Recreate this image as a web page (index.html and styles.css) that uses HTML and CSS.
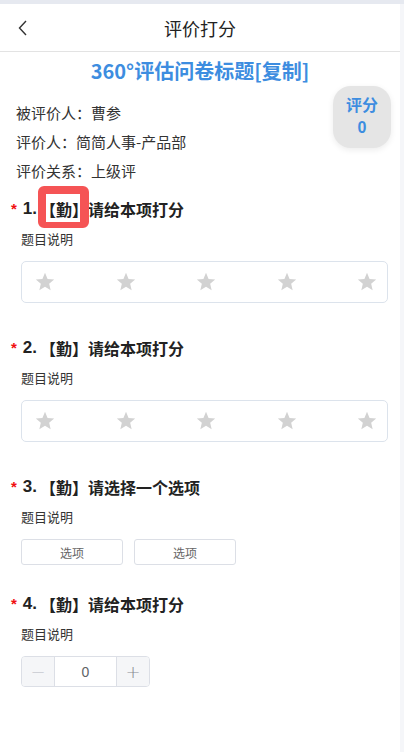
FILE: index.html
```html
<!DOCTYPE html>
<html lang="zh-CN">
<head>
<meta charset="utf-8">
<link rel="stylesheet" href="styles.css">
</head>
<body>
<div class="page">
  <header class="nav">
    <svg class="back" width="10" height="16" viewBox="0 0 10 16"><polyline points="8,1 1.5,8 8,15" fill="none" stroke="#333" stroke-width="1.4"/></svg>
    <div class="nav-title">评价打分</div>
  </header>
  <main class="content">
    <h1 class="survey-title">360°评估问卷标题[复制]</h1>
    <div class="info">
      <div class="info-line">被评价人：曹参</div>
      <div class="info-line">评价人：简简人事-产品部</div>
      <div class="info-line">评价关系：上级评</div>
      <div class="score-badge"><div>评分</div><div>0</div></div>
    </div>

    <section class="question">
      <div class="q-title"><span class="req">*</span><span class="q-num">1.</span><span class="tag mark">【勤】</span>请给本项打分</div>
      <div class="q-desc">题目说明</div>
      <div class="rate">
        <svg class="star" viewBox="0 0 24 24"><path d="M12 17.27L18.18 21l-1.64-7.03L22 9.24l-7.19-.61L12 2 9.19 8.63 2 9.24l5.46 4.73L5.82 21z"/></svg>
        <svg class="star" viewBox="0 0 24 24"><path d="M12 17.27L18.18 21l-1.64-7.03L22 9.24l-7.19-.61L12 2 9.19 8.63 2 9.24l5.46 4.73L5.82 21z"/></svg>
        <svg class="star" viewBox="0 0 24 24"><path d="M12 17.27L18.18 21l-1.64-7.03L22 9.24l-7.19-.61L12 2 9.19 8.63 2 9.24l5.46 4.73L5.82 21z"/></svg>
        <svg class="star" viewBox="0 0 24 24"><path d="M12 17.27L18.18 21l-1.64-7.03L22 9.24l-7.19-.61L12 2 9.19 8.63 2 9.24l5.46 4.73L5.82 21z"/></svg>
        <svg class="star" viewBox="0 0 24 24"><path d="M12 17.27L18.18 21l-1.64-7.03L22 9.24l-7.19-.61L12 2 9.19 8.63 2 9.24l5.46 4.73L5.82 21z"/></svg>
      </div>
    </section>

    <section class="question">
      <div class="q-title"><span class="req">*</span><span class="q-num">2.</span><span class="tag">【勤】</span>请给本项打分</div>
      <div class="q-desc">题目说明</div>
      <div class="rate">
        <svg class="star" viewBox="0 0 24 24"><path d="M12 17.27L18.18 21l-1.64-7.03L22 9.24l-7.19-.61L12 2 9.19 8.63 2 9.24l5.46 4.73L5.82 21z"/></svg>
        <svg class="star" viewBox="0 0 24 24"><path d="M12 17.27L18.18 21l-1.64-7.03L22 9.24l-7.19-.61L12 2 9.19 8.63 2 9.24l5.46 4.73L5.82 21z"/></svg>
        <svg class="star" viewBox="0 0 24 24"><path d="M12 17.27L18.18 21l-1.64-7.03L22 9.24l-7.19-.61L12 2 9.19 8.63 2 9.24l5.46 4.73L5.82 21z"/></svg>
        <svg class="star" viewBox="0 0 24 24"><path d="M12 17.27L18.18 21l-1.64-7.03L22 9.24l-7.19-.61L12 2 9.19 8.63 2 9.24l5.46 4.73L5.82 21z"/></svg>
        <svg class="star" viewBox="0 0 24 24"><path d="M12 17.27L18.18 21l-1.64-7.03L22 9.24l-7.19-.61L12 2 9.19 8.63 2 9.24l5.46 4.73L5.82 21z"/></svg>
      </div>
    </section>

    <section class="question question-choice">
      <div class="q-title"><span class="req">*</span><span class="q-num">3.</span><span class="tag">【勤】</span>请选择一个选项</div>
      <div class="q-desc">题目说明</div>
      <div class="options">
        <button class="option">选项</button>
        <button class="option">选项</button>
      </div>
    </section>

    <section class="question">
      <div class="q-title"><span class="req">*</span><span class="q-num">4.</span><span class="tag">【勤】</span>请给本项打分</div>
      <div class="q-desc">题目说明</div>
      <div class="stepper">
        <span class="step-btn minus">−</span>
        <span class="step-val">0</span>
        <span class="step-btn plus">+</span>
      </div>
    </section>
  </main>
</div>
</body>
</html>
```

FILE: styles.css
```css
* { box-sizing: border-box; }
html, body { margin: 0; padding: 0; }
body {
  background: #f5f6f9;
  border-top: 4px solid #e6e9f0;
  font-family: "Noto Sans CJK SC", "Noto Sans", sans-serif;
  color: #333;
  height: 752px;
  overflow: hidden;
}
.page {
  width: 400px;
  background: #fff;
  min-height: 748px;
}
.nav {
  height: 48px;
  border-bottom: 1px solid #e3e3e3;
  display: flex;
  align-items: center;
  justify-content: center;
  position: relative;
}
.back {
  position: absolute;
  left: 18px;
  top: 16px;
}
.nav-title {
  font-size: 18px;
  color: #222;
}
.content {
  padding: 0 0 40px;
}
.survey-title {
  margin: 0;
  padding-top: 6px;
  text-align: center;
  font-size: 20px;
  line-height: 26px;
  font-weight: bold;
  color: #3d8de0;
}
.info {
  position: relative;
  margin-top: 14px;
  padding-left: 16px;
}
.info-line {
  font-size: 15px;
  line-height: 29px;
  color: #333;
}
.score-badge {
  position: absolute;
  right: 9px;
  top: -12px;
  width: 58px;
  height: 62px;
  border-radius: 18px;
  background: #e5e5e5;
  box-shadow: 0 2px 6px rgba(0,0,0,0.08);
  display: flex;
  flex-direction: column;
  align-items: center;
  justify-content: center;
  font-size: 16px;
  line-height: 22px;
  font-weight: bold;
  color: #3d8de0;
  font-family: "Liberation Sans", "Noto Sans CJK SC", sans-serif;
}
.question {
  margin-top: 12px;
  margin-bottom: 33px;
}
.question + .question { margin-top: 0; }
.question-choice { margin-bottom: 27px; }
.q-title {
  padding-left: 11px;
  font-size: 16px;
  line-height: 24px;
  font-weight: bold;
  color: #222;
  display: flex;
  align-items: center;
}
.req {
  color: #f01010;
  font-size: 15px;
  font-weight: bold;
  margin-right: 6px;
  font-family: "Liberation Sans", sans-serif;
}
.q-num {
  font-family: "Liberation Sans", sans-serif;
  font-size: 17px;
  margin-right: 3px;
}
.tag { position: relative; }
.mark::after {
  content: "";
  position: absolute;
  left: -2px;
  right: -1px;
  top: -11px;
  bottom: -7px;
  border: solid #f55455;
  border-width: 8px 9px 6px 8px;
  border-radius: 6px;
}
.q-desc {
  margin-top: 8px;
  padding-left: 21px;
  font-size: 13px;
  line-height: 20px;
  color: #333;
}
.rate {
  margin: 12px 12px 0 21px;
  height: 42px;
  border: 1px solid #dce3ec;
  border-radius: 5px;
  display: flex;
  align-items: center;
  justify-content: space-between;
  padding: 0 9px 0 12px;
}
.star {
  width: 22px;
  height: 22px;
  fill: #d2d2d2;
}
.options {
  margin: 12px 0 0 21px;
  display: flex;
  gap: 11px;
}
.option {
  width: 102px;
  height: 26px;
  border: 1px solid #dcdfe6;
  border-radius: 3px;
  background: #fff;
  font-family: "Noto Sans CJK SC", sans-serif;
  font-size: 12px;
  color: #666;
  padding: 0;
}
.stepper {
  margin: 12px 0 0 21px;
  width: 129px;
  height: 31px;
  border: 1px solid #dcdfe6;
  border-radius: 4px;
  display: flex;
  overflow: hidden;
}
.step-btn {
  width: 33px;
  background: #f5f6f8;
  display: flex;
  align-items: center;
  justify-content: center;
  font-size: 18px;
  font-family: "DejaVu Sans", sans-serif;
  font-weight: 200;
}
.minus { color: #c8cbd2; border-right: 1px solid #dcdfe6; }
.plus { color: #8a8d94; border-left: 1px solid #dcdfe6; }
.step-val {
  flex: 1;
  display: flex;
  align-items: center;
  justify-content: center;
  font-size: 14px;
  color: #606266;
  font-family: "Liberation Sans", sans-serif;
}
```
